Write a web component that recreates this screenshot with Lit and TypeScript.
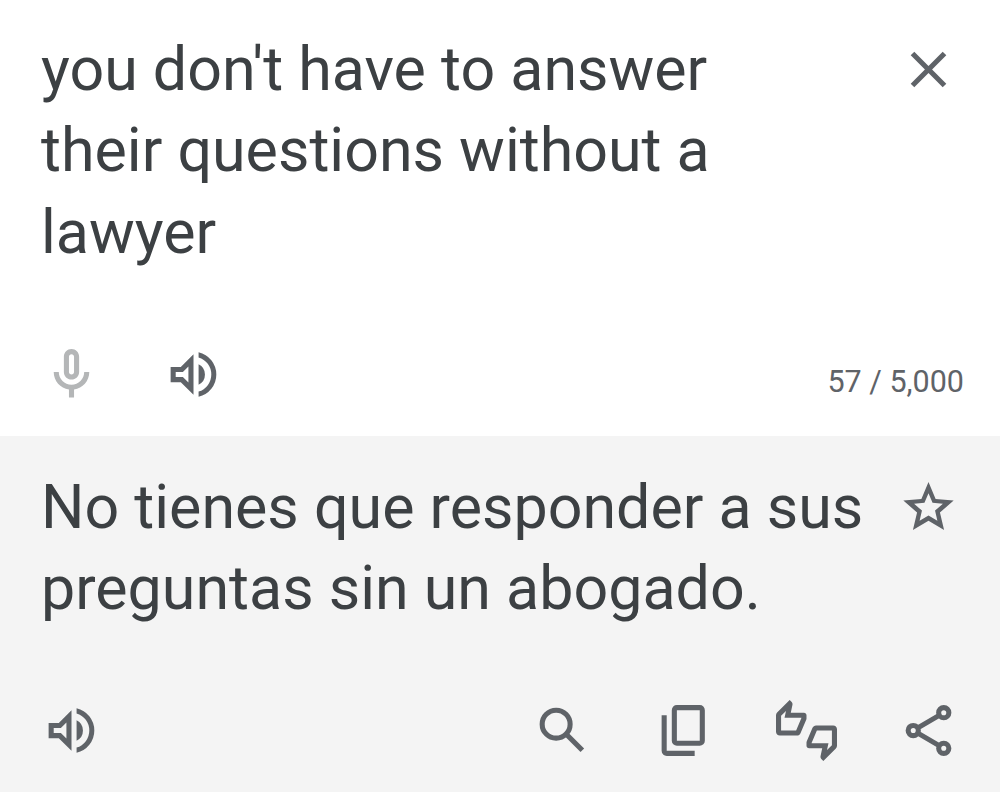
import { LitElement, html, css, svg } from 'lit';
import { customElement, property } from 'lit/decorators.js';

const icons: Record<string, unknown> = {
  close: svg`<path d="M19 6.41L17.59 5 12 10.59 6.41 5 5 6.41 10.59 12 5 17.59 6.41 19 12 13.41 17.59 19 19 17.59 13.41 12z"/>`,
  mic: svg`<path d="M12 14c1.66 0 3-1.34 3-3V5c0-1.66-1.34-3-3-3S9 3.34 9 5v6c0 1.66 1.34 3 3 3zm-1-9c0-.55.45-1 1-1s1 .45 1 1v6c0 .55-.45 1-1 1s-1-.45-1-1V5zm6 6c0 2.76-2.24 5-5 5s-5-2.24-5-5H5c0 3.53 2.61 6.43 6 6.92V21h2v-3.08c3.39-.49 6-3.39 6-6.92h-2z"/>`,
  volume: svg`<path d="M3 9v6h4l5 5V4L7 9H3zm7-.17v6.34L7.83 13H5v-2h2.83L10 8.83zM16.5 12A4.5 4.5 0 0 0 14 7.97v8.05A4.47 4.47 0 0 0 16.5 12zM14 3.23v2.06a7 7 0 0 1 0 13.42v2.06a9 9 0 0 0 0-17.54z"/>`,
  star: svg`<path d="M21.9 9.24l-7.1-.62L12 2 9.2 8.63 2.1 9.24l5.4 4.73L5.87 20.9 12 17.22 18.13 20.9l-1.63-6.93L21.9 9.24zM12 15.1l-3.5 2.1.93-3.98-3.1-2.68 4.08-.36L12 6.4l1.59 3.78 4.08.36-3.1 2.68.93 3.98L12 15.1z"/>`,
  search: svg`<g fill="none" stroke="currentColor" stroke-width="2"><circle cx="9.5" cy="9.5" r="5.5"/><path d="M13.4 13.4l6.4 6.4"/></g>`,
  copy: svg`<g fill="none" stroke="currentColor" stroke-width="2"><rect x="8" y="3" width="11" height="14" rx="1"/><path d="M4 6v14a1 1 0 0 0 1 1h11"/></g>`,
  thumbs: svg`<path d="M12 6c0-.55-.45-1-1-1H5.82l.66-3.18.02-.23c0-.31-.13-.59-.33-.8L5.38 0 .44 4.94C.17 5.21 0 5.59 0 6v6.5c0 .83.67 1.5 1.5 1.5h6.75c.62 0 1.15-.38 1.38-.91l2.26-5.29c.07-.17.11-.36.11-.55V6zm-2 1.13L7.92 12H2V6.21l1.93-1.93L3.36 7H10v.13zM22.5 10h-6.75c-.62 0-1.15.38-1.38.91l-2.26 5.29c-.07.17-.11.36-.11.55V18c0 .55.45 1 1 1h5.18l-.66 3.18-.02.24c0 .31.13.59.33.8l.79.77 4.94-4.94c.27-.27.44-.65.44-1.06v-6.5c0-.83-.67-1.5-1.5-1.5zm-.5 7.79l-1.93 1.93.57-2.72H14v-.13L16.08 12H22v5.79z"/>`,
  share: svg`<g fill="none" stroke="currentColor" stroke-width="2"><circle cx="6" cy="12" r="2"/><circle cx="18" cy="5" r="2"/><circle cx="18" cy="19" r="2"/><path d="M7.8 10.95l8.4-4.9M7.8 13.05l8.4 4.9"/></g>`,
};

@customElement('app-icon')
class AppIcon extends LitElement {
  @property() name = '';

  static styles = css`
    :host {
      display: block;
      flex: none;
      width: 61px;
      height: 61px;
      color: #5f6368;
    }
    svg {
      display: block;
      width: 100%;
      height: 100%;
      fill: currentColor;
    }
  `;

  render() {
    return html`<svg viewBox="0 0 24 24">${icons[this.name]}</svg>`;
  }
}

@customElement('app-root')
class AppRoot extends LitElement {
  static styles = css`
    :host {
      display: flex;
      flex-direction: column;
      height: 794px;
      background: #fff;
      color: #3c4043;
      font-family: Roboto, sans-serif;
    }
    .panel {
      display: flex;
      flex-direction: column;
      justify-content: space-between;
      box-sizing: border-box;
      padding: 28.6px 41px 31px;
    }
    .source {
      height: 436px;
    }
    .target {
      height: 356px;
      padding-top: 30.6px;
      background: #f4f4f4;
    }
    .top {
      display: flex;
      justify-content: space-between;
      align-items: flex-start;
    }
    .top app-icon {
      margin-top: 10.4px;
    }
    .text {
      font-size: 60.94px;
      line-height: 81.6px;
      white-space: nowrap;
    }
    .actions {
      display: flex;
      align-items: center;
      gap: 61px;
    }
    .spacer {
      flex: 1;
    }
    .disabled {
      color: #b4b6b7;
    }
    .counter {
      margin: 14px -5px 0 0;
      color: #5f6368;
      font-size: 30.5px;
      line-height: 36px;
      white-space: nowrap;
    }
  `;

  render() {
    return html`
      <!-- source text -->
      <div class="panel source">
        <div class="top">
          <div class="text">you don't have to answer<br />their questions without a<br />lawyer</div>
          <app-icon name="close"></app-icon>
        </div>
        <div class="actions">
          <app-icon class="disabled" name="mic"></app-icon>
          <app-icon name="volume"></app-icon>
          <div class="spacer"></div>
          <div class="counter">57 / 5,000</div>
        </div>
      </div>

      <!-- translation -->
      <div class="panel target">
        <div class="top">
          <div class="text">No tienes que responder a sus<br />preguntas sin un abogado.</div>
          <app-icon name="star"></app-icon>
        </div>
        <div class="actions">
          <app-icon name="volume"></app-icon>
          <div class="spacer"></div>
          <app-icon name="search"></app-icon>
          <app-icon name="copy"></app-icon>
          <app-icon name="thumbs"></app-icon>
          <app-icon name="share"></app-icon>
        </div>
      </div>
    `;
  }
}
